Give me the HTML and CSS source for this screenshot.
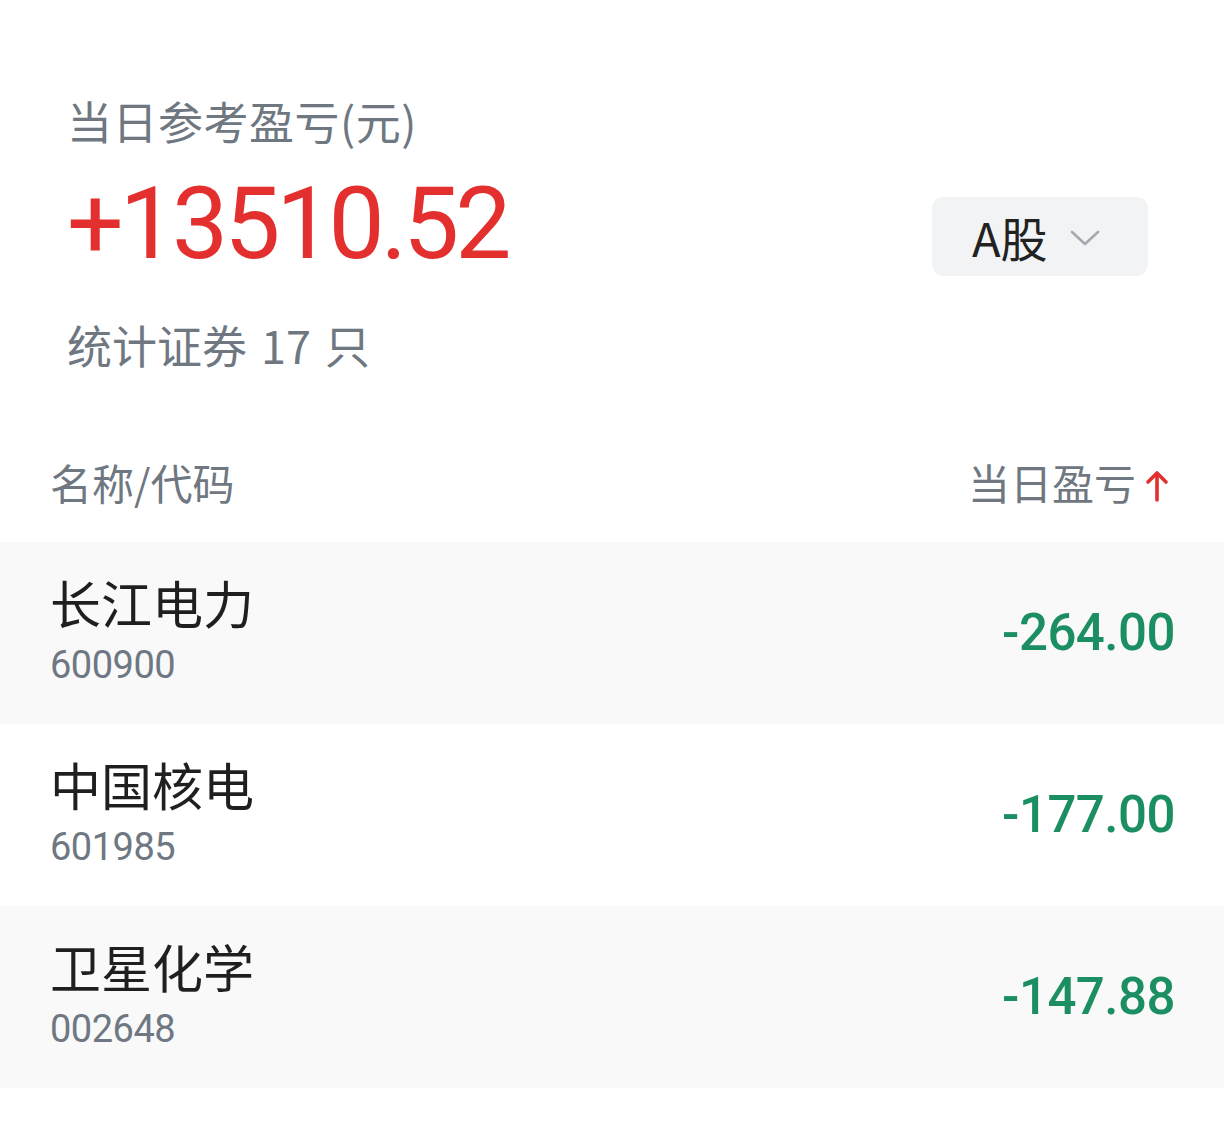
FILE: index.html
```html
<!DOCTYPE html>
<html lang="zh-CN">
<head>
<meta charset="utf-8">
<title>当日参考盈亏</title>
<link rel="stylesheet" href="styles.css">
</head>
<body>
<div class="page">
  <section class="summary">
    <div class="summary-title">当日参考盈亏(元)</div>
    <div class="summary-row">
      <div class="summary-value">+13510.52</div>
      <div class="market-select">
        <span class="market-label">A股</span>
        <svg class="chevron" width="30" height="16" viewBox="0 0 30 16"><polyline points="2,2 15,14 28,2" fill="none" stroke="#a4aab1" stroke-width="2.6" stroke-linecap="round" stroke-linejoin="round"/></svg>
      </div>
    </div>
    <div class="summary-count">统计证券&nbsp;17&nbsp;只</div>
  </section>

  <div class="list-header">
    <span class="header-name">名称/代码</span>
    <span class="header-pl">当日盈亏<svg class="sort-arrow" width="26" height="36" viewBox="0 0 26 36"><path d="M13 33 V6 M4 15 L13 6 L22 15" fill="none" stroke="#e0302e" stroke-width="3.6" stroke-linecap="round" stroke-linejoin="round"/></svg></span>
  </div>

  <div class="list">
    <div class="row row-alt">
      <div class="stock">
        <div class="stock-name">长江电力</div>
        <div class="stock-code">600900</div>
      </div>
      <div class="stock-pl">-264.00</div>
    </div>
    <div class="row">
      <div class="stock">
        <div class="stock-name">中国核电</div>
        <div class="stock-code">601985</div>
      </div>
      <div class="stock-pl">-177.00</div>
    </div>
    <div class="row row-alt">
      <div class="stock">
        <div class="stock-name">卫星化学</div>
        <div class="stock-code">002648</div>
      </div>
      <div class="stock-pl">-147.88</div>
    </div>
  </div>
</div>
</body>
</html>
```
FILE: styles.css
```css
* { box-sizing: border-box; }
html, body { margin: 0; padding: 0; background: #ffffff; }
body {
  font-family: "Noto Sans CJK SC", "Noto Sans", sans-serif;
  color: #222222;
}
.page { width: 1224px; }

.summary {
  padding: 94px 76px 0 67px;
}
.summary-title {
  font-size: 45px;
  line-height: 54px;
  color: #6f7781;
  letter-spacing: 0.5px;
}
.summary-row {
  display: flex;
  justify-content: space-between;
  align-items: flex-start;
  margin-top: 26px;
}
.summary-value {
  font-family: Roboto, "Noto Sans", sans-serif;
  font-size: 100px;
  line-height: 100px;
  font-weight: 400;
  letter-spacing: -4px;
  color: #e3302f;
}
.market-select {
  margin-top: 23px;
  width: 216px;
  height: 79px;
  background: #f2f3f5;
  border-radius: 12px;
  display: flex;
  align-items: center;
  padding-left: 40px;
  gap: 22px;
}
.market-label {
  font-size: 47px;
  line-height: 50px;
  color: #222222;
}
.chevron { display: block; margin-top: 2px; }
.summary-count {
  margin-top: 42px;
  font-size: 45px;
  line-height: 54px;
  color: #6f7781;
  word-spacing: 4px;
}

.list-header {
  display: flex;
  justify-content: space-between;
  align-items: center;
  padding: 0 54px 0 50px;
  margin-top: 85px;
  height: 50px;
  font-size: 42px;
  line-height: 50px;
  color: #6f7781;
}
.header-pl {
  display: flex;
  align-items: center;
  gap: 8px;
}
.sort-arrow { display: block; margin-top: 6px; }

.list { margin-top: 35px; }
.row {
  height: 182px;
  display: flex;
  justify-content: space-between;
  align-items: center;
  padding: 0 49px 0 50px;
  background: #ffffff;
}
.row-alt { background: #f9f9fa; }
.stock {
  display: flex;
  flex-direction: column;
  gap: 11px;
  margin-bottom: 8px;
}
.stock-name {
  font-size: 51px;
  line-height: 60px;
  color: #1f1f1f;
}
.stock-code {
  font-family: Roboto, "Noto Sans", sans-serif;
  font-size: 38px;
  line-height: 44px;
  color: #6e7782;
  letter-spacing: -0.5px;
}
.stock-pl {
  font-family: Roboto, "Noto Sans", sans-serif;
  font-size: 51px;
  line-height: 60px;
  font-weight: 500;
  letter-spacing: -0.5px;
  color: #1c8f62;
}
```
